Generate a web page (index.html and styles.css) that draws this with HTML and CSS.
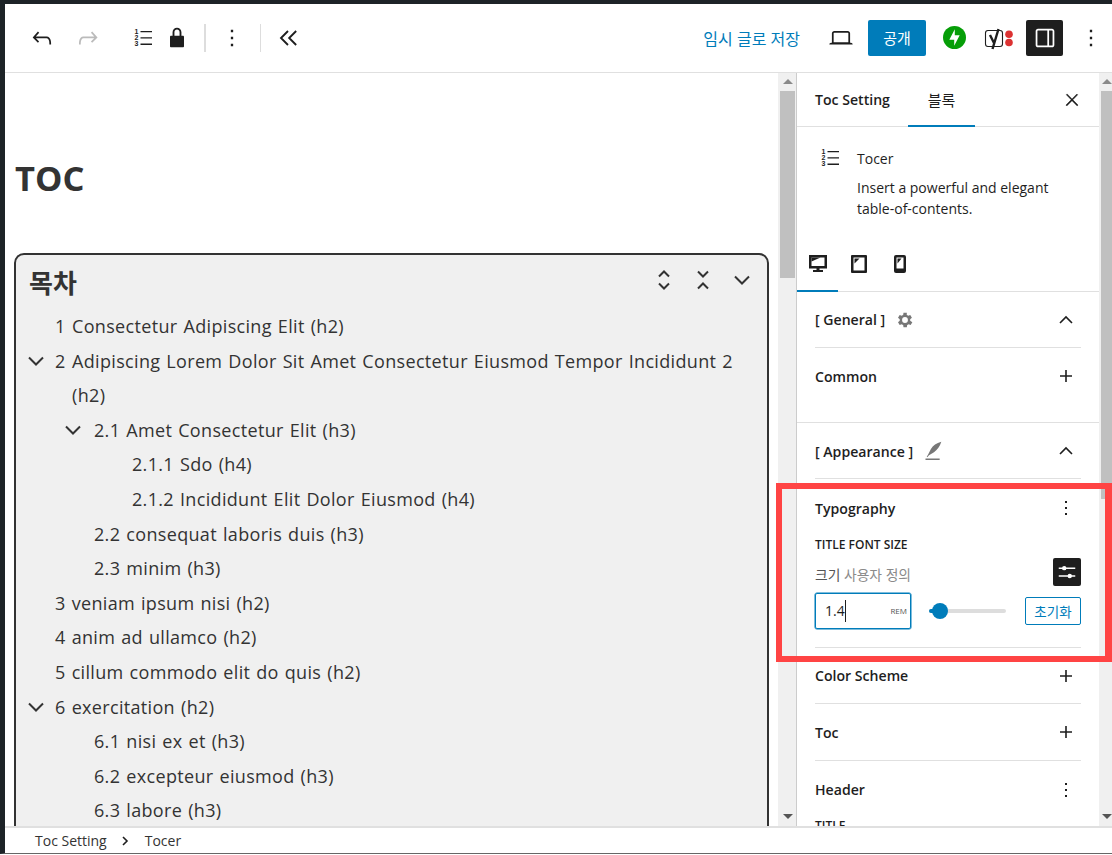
FILE: index.html
```html
<!DOCTYPE html>
<html lang="ko">
<head>
<meta charset="utf-8">
<title>Toc Setting</title>
<link rel="stylesheet" href="styles.css">
</head>
<body>
<div class="app">
  <header class="toolbar">
    <div class="tools-left">
      <svg class="ic big t-undo" viewBox="0 0 24 24"><path d="M18.3 11.7c-.6-.6-1.4-.9-2.3-.9H6.7l2.9-3.3-1.1-1-4.5 5L8.500 16l1-1-2.700-2.700H16c.5 0 .9.2 1.300.5 1 1 1 3.400 1 4.500v.3h1.500v-.2c0-1.500 0-4.300-1.500-5.700z"/></svg>
      <svg class="ic big t-redo dim" viewBox="0 0 24 24"><path d="M15.6 6.5l-1.100 1 2.900 3.300H8c-.9 0-1.700.3-2.300.9-1.400 1.500-1.400 4.200-1.400 5.700v.2h1.500v-.3c0-1.100 0-3.500 1-4.500.3-.3.7-.5 1.300-.5h9.200L14.500 15l1.100 1.100 4.600-4.600-4.600-5z"/></svg>
      <svg class="ic t-list" viewBox="0 0 24 24"><use href="#numlist"/></svg>
      <svg class="ic big t-lock" viewBox="0 0 24 24"><path d="M17 10h-1.200V7c0-2.100-1.700-3.800-3.800-3.800-2.100 0-3.800 1.700-3.800 3.800v3H7c-.6 0-1 .4-1 1v8c0 .6.4 1 1 1h10c.6 0 1-.4 1-1v-8c0-.6-.4-1-1-1zm-2.800 0H9.800V7c0-1.200 1-2.200 2.200-2.200s2.200 1 2.200 2.200v3z"/></svg>
      <span class="vsep sep-a"></span>
      <svg class="ic big t-more" viewBox="0 0 24 24"><path d="M13 19h-2v-2h2v2zm0-6h-2v-2h2v2zm0-6h-2V5h2v2z"/></svg>
      <span class="vsep sep-b"></span>
      <svg class="ic big t-collapse" viewBox="0 0 24 24"><path class="line" d="M12 6l-6 6 6 6M19 6l-6 6 6 6"/></svg>
    </div>
    <div class="tools-right">
      <span class="draft">임시 글로 저장</span>
      <svg class="ic big t-laptop" viewBox="0 0 24 24"><path d="M20.500 16h-.7V8c0-1.100-.9-2-2-2H6.200c-1.100 0-2 .9-2 2v8h-.7c-.8 0-1.500.7-1.500 1.500h20c0-.8-.7-1.500-1.500-1.500zM5.700 8c0-.3.2-.5.5-.5h11.600c.3 0 .5.2.5.5v7.600H5.700V8z"/></svg>
      <span class="publish">공개</span>
      <svg class="t-jetpack" viewBox="0 0 24 24"><circle cx="12" cy="12" r="12" fill="#069e08"/><path fill="#fff" d="M12.300 3.500v10.800H6.600zM11.700 20.500V9.700h5.700z"/></svg>
      <svg class="t-yoast" viewBox="0 0 30 24"><rect x="1.500" y="4.500" width="17" height="16" rx="2.500" fill="#fff" stroke="#1e1e1e" stroke-width="1.100"/><path fill="none" stroke="#1e1e1e" stroke-width="2.400" d="M6 9l4 8M14.500 3 8.500 23"/><circle cx="25" cy="8.200" r="3.800" fill="#dc3232"/><circle cx="25" cy="16.500" r="3.800" fill="#dc3232"/></svg>
      <span class="side-toggle"><svg class="ic big light" viewBox="0 0 24 24"><path d="M18 4H6c-1.100 0-2 .9-2 2v12c0 1.100.9 2 2 2h12c1.100 0 2-.9 2-2V6c0-1.100-.9-2-2-2zm-4 14.500H6c-.3 0-.5-.2-.5-.5V6c0-.3.2-.5.5-.5h8v13zm4.500-.5c0 .3-.2.5-.5.5h-2.500v-13H18c.3 0 .5.2.5.5v12z"/></svg></span>
      <svg class="ic big t-more2" viewBox="0 0 24 24"><path d="M13 19h-2v-2h2v2zm0-6h-2v-2h2v2zm0-6h-2V5h2v2z"/></svg>
    </div>
  </header>

  <div class="workspace">
    <main class="editor">
      <h1 class="post-title">TOC</h1>
      <section class="toc">
        <div class="toc-head">
          <h2 class="toc-title">목차</h2>
          <div class="toc-actions">
            <svg class="a-icon a-first" viewBox="0 0 12 20"><path class="line" d="M1 6.500l5-5 5 5M1 13.500l5 5 5-5"/></svg>
            <svg class="a-icon a-second" viewBox="0 0 12 20"><path class="line" d="M1 1.500l5 5 5-5M1 18.500l5-5 5 5"/></svg>
            <svg class="a-chev" viewBox="0 0 16 10"><path class="line" d="M1 1.500l7 7 7-7"/></svg>
          </div>
        </div>
        <ul class="toc-list">
          <li class="row l1"><span class="num">1</span><span>Consectetur Adipiscing Elit (h2)</span></li>
          <li class="row l1"><svg class="tog" viewBox="0 0 16 10"><path class="line" d="M1 1.500l7 7 7-7"/></svg><span class="num">2</span><span class="wrap">Adipiscing Lorem Dolor Sit Amet Consectetur Eiusmod Tempor Incididunt 2 (h2)</span></li>
          <li class="row l2"><svg class="tog" viewBox="0 0 16 10"><path class="line" d="M1 1.500l7 7 7-7"/></svg><span>2.1 Amet Consectetur Elit (h3)</span></li>
          <li class="row l3"><span>2.1.1 Sdo (h4)</span></li>
          <li class="row l3"><span>2.1.2 Incididunt Elit Dolor Eiusmod (h4)</span></li>
          <li class="row l2"><span>2.2 consequat laboris duis (h3)</span></li>
          <li class="row l2"><span>2.3 minim (h3)</span></li>
          <li class="row l1"><span>3 veniam ipsum nisi (h2)</span></li>
          <li class="row l1"><span>4 anim ad ullamco (h2)</span></li>
          <li class="row l1"><span>5 cillum commodo elit do quis (h2)</span></li>
          <li class="row l1"><svg class="tog" viewBox="0 0 16 10"><path class="line" d="M1 1.500l7 7 7-7"/></svg><span>6 exercitation (h2)</span></li>
          <li class="row l2"><span>6.1 nisi ex et (h3)</span></li>
          <li class="row l2"><span>6.2 excepteur eiusmod (h3)</span></li>
          <li class="row l2"><span>6.3 labore (h3)</span></li>
        </ul>
      </section>
    </main>
    <div class="scrollbar main-bar"><i class="up"></i><b class="thumb main-thumb"></b><span class="fill"></span><i class="down"></i></div>

    <aside class="sidebar">
      <div class="tabs">
        <span class="tab">Toc Setting</span>
        <span class="tab active">블록</span>
        <svg class="ic close" viewBox="0 0 24 24"><path d="M13 11.800l6.100-6.300-1-1-6.100 6.200-6.100-6.300-1 1 6.100 6.300-6.500 6.700 1 1 6.500-6.600 6.500 6.600 1-1z"/></svg>
      </div>
      <div class="card">
        <svg class="ic card-ic" viewBox="0 0 24 24"><use href="#numlist"/></svg>
        <div class="card-text">
          <div class="card-name">Tocer</div>
          <p class="card-desc">Insert a powerful and elegant table-of-contents.</p>
        </div>
      </div>
      <div class="devices">
        <span class="device active"><svg viewBox="0 0 20 20" class="dev"><path d="M1 1h18v13.500H11.500V16H15v2H5v-2h3.500v-1.500H1z"/><path fill="#fff" d="M3.500 3.500h13v8.500h-13z"/><path d="M3.500 3.500h9l-9 4z"/></svg></span>
        <span class="device"><svg viewBox="0 0 20 20" class="dev"><rect x="2" y="1" width="16" height="18" rx="1"/><path fill="#fff" d="M4.500 3.500h11v13h-11z"/><path d="M5.500 4.500h5l-5 5z"/></svg></span>
        <span class="device"><svg viewBox="0 0 20 20" class="dev"><rect x="4" y="1" width="12" height="18" rx="2"/><path fill="#fff" d="M6.500 3.500h7v11h-7z"/><path d="M7.500 4.500h4l-4 5z"/></svg></span>
      </div>
      <div class="group">
        <div class="sec-head h-general"><span class="sec-title">[ General ]<svg class="sec-ic" viewBox="0 0 24 24"><path d="M19.400 13a7.700 7.700 0 0 0 0-2l2.100-1.600-2-3.500-2.500 1a7.500 7.500 0 0 0-1.700-1L15.400 3.300h-4l-.4 2.600a7.500 7.500 0 0 0-1.700 1l-2.500-1-2 3.500L6.900 11a7.700 7.700 0 0 0 0 2l-2.100 1.600 2 3.500 2.500-1c.5.400 1.100.7 1.700 1l.4 2.600h4l.4-2.600c.6-.3 1.200-.6 1.700-1l2.500 1 2-3.500zM13.200 15.500a3.500 3.500 0 1 1 0-7 3.500 3.500 0 0 1 0 7z" transform="translate(-1.200 0)"/></svg></span><svg class="ic chev" viewBox="0 0 24 24"><path class="line" d="M6 15l6-6 6 6"/></svg></div>
        <div class="sec-row common"><span class="sec-title">Common</span><svg class="ic plus" viewBox="0 0 24 24"><path d="M18 11.200h-5.200V6h-1.600v5.200H6v1.600h5.200V18h1.600v-5.200H18z"/></svg></div>
      </div>
      <div class="group g-appear">
        <div class="sec-head h-appear"><span class="sec-title">[ Appearance ]<svg class="sec-ic pen" viewBox="0 0 24 24"><path d="M22 1c-6 1.500-10 4.500-12.500 8.500L6 16.500 4.500 19l.7.5 2-2.500 6-3.500C17 11 20 7 22 1zM3 21h17v1.800H3z"/></svg></span><svg class="ic chev" viewBox="0 0 24 24"><path class="line" d="M6 15l6-6 6 6"/></svg></div>
        <div class="typo">
          <div class="typo-head"><span class="sec-title">Typography</span><svg class="ic more-s" viewBox="0 0 24 24"><path d="M13 19h-2v-2h2v2zm0-6h-2v-2h2v2zm0-6h-2V5h2v2z"/></svg></div>
          <div class="cap">TITLE FONT SIZE</div>
          <div class="size-row"><span class="size-label">크기 <em>사용자 정의</em></span><span class="tune"><svg viewBox="0 0 24 24" class="tune-ic"><path fill="#fff" d="M3 7h18v1.600H3zM3 15.500h18v1.600H3z"/><circle cx="9" cy="7.800" r="2.400" fill="#fff"/><circle cx="15" cy="16.300" r="2.400" fill="#fff"/></svg></span></div>
          <div class="ctl-row">
            <div class="num-input"><span class="val">1.4</span><span class="unit">REM</span></div>
            <div class="slider"><span class="track-on"></span><span class="knob"></span></div>
            <span class="reset">초기화</span>
          </div>
        </div>
        <div class="sec-row cs"><span class="sec-title">Color Scheme</span><svg class="ic plus" viewBox="0 0 24 24"><path d="M18 11.200h-5.200V6h-1.600v5.200H6v1.600h5.200V18h1.600v-5.200H18z"/></svg></div>
        <div class="sec-row"><span class="sec-title">Toc</span><svg class="ic plus" viewBox="0 0 24 24"><path d="M18 11.200h-5.200V6h-1.600v5.200H6v1.600h5.200V18h1.600v-5.200H18z"/></svg></div>
        <div class="sec-row nob"><span class="sec-title">Header</span><svg class="ic more-s" viewBox="0 0 24 24"><path d="M13 19h-2v-2h2v2zm0-6h-2v-2h2v2zm0-6h-2V5h2v2z"/></svg></div>
        <div class="cap clipcap">TITLE</div>
      </div>
    </aside>
    <div class="scrollbar side-bar"><i class="up"></i><b class="thumb side-thumb"></b><span class="fill"></span><i class="down"></i></div>
  </div>

  <footer class="crumbs"><span>Toc Setting</span><svg class="crumb-sep" viewBox="0 0 8 10"><path class="line" d="M2 1l4 4-4 4"/></svg><span>Tocer</span></footer>
</div>
<div class="annotation"></div>
<svg class="defs" width="0" height="0"><defs><g id="numlist"><path d="M9.500 5h11.500v1.300H9.500zM9.500 11.300h11.500v1.300H9.500zM9.500 17.600h11.500v1.300H9.500z"/><text x="3.500" y="8" class="nl">1</text><text x="3.500" y="14" class="nl">2</text><text x="3.500" y="20" class="nl">3</text></g></defs></svg>
</body>
</html>
```
FILE: styles.css
```css
* { box-sizing: border-box; }
html, body { margin: 0; height: 855px; overflow: hidden; background: #fff; }
body { font-family: "Open Sans", "Noto Sans CJK KR", sans-serif; color: #1e1e1e; font-size: 14px; position: relative; }
.defs { position: absolute; }
.nl { font-size: 7px; font-weight: 700; font-family: "Liberation Sans", sans-serif; fill: currentColor; }
svg { display: block; flex: none; }
.ic { width: 24px; height: 24px; fill: #1e1e1e; color: #1e1e1e; }
.ic.big { width: 28px; height: 28px; }
.line { fill: none; stroke: #333; stroke-width: 2; }
.app { height: 854px; border-top: 4px solid #1d2327; border-left: 5px solid #1d2327; border-bottom: 1px solid #666; display: flex; flex-direction: column; }

.toolbar { height: 69px; flex: none; border-bottom: 1px solid #e0e0e0; display: flex; justify-content: space-between; align-items: center; padding-bottom: 1px; }
.tools-left { display: flex; align-items: center; padding-left: 23px; }
.t-redo { margin-left: 18px; }
.ic.dim { fill: #bbb; }
.t-list { margin-left: 29px; }
.t-lock { margin-left: 8px; }
.t-more { margin-left: 12px; }
.t-collapse { margin-left: 13px; }
.t-collapse .line { stroke: #1e1e1e; stroke-width: 1.600; }
.vsep { width: 1px; height: 28px; background: #ddd; }
.sep-a { margin-left: 13px; width: 2px; }
.sep-b { margin-left: 14px; }
.tools-right { display: flex; align-items: center; padding-right: 7px; }
.draft { color: #007cba; font-size: 16px; margin-right: 27px; white-space: nowrap; }
.publish { width: 58px; height: 36px; background: #007cba; color: #fff; border-radius: 2px; display: flex; align-items: center; justify-content: center; margin-left: 13px; font-size: 15px; }
.t-jetpack { width: 23px; height: 23px; margin-left: 17px; }
.t-yoast { width: 30px; height: 24px; margin-left: 18px; }
.side-toggle { width: 37px; height: 36px; background: #1e1e1e; border-radius: 2px; display: flex; align-items: center; justify-content: center; margin-left: 12px; }
.ic.light { fill: #fff; }
.t-more2 { margin-left: 14px; }

.workspace { flex: 1; min-height: 0; display: flex; overflow: hidden; }
.editor { width: 773px; flex: none; overflow: hidden; padding: 0 9px 0 9px; }
.post-title { margin: 0; padding-top: 80px; height: 180px; font-size: 34.500px; line-height: 49px; font-weight: 700; color: #333; padding-left: 1px; }
.toc { border: 2px solid #333; border-radius: 10px; background: #f0f0f0; padding: 0 13px; height: 700px; color: #333; font-family: "Open Sans", "Noto Sans CJK KR", sans-serif; font-size: 18px; letter-spacing: .33px; word-spacing: 1px; }
.toc-head { display: flex; justify-content: space-between; align-items: flex-start; height: 54px; }
.toc-title { margin: 0; font-size: 26px; font-weight: 700; line-height: 56px; letter-spacing: 0; }
.toc-actions { display: flex; align-items: center; height: 50px; }
.a-icon { width: 12px; height: 20px; }
.a-first { margin-right: 27px; }
.a-second { margin-right: 25px; }
.a-chev { width: 16px; height: 10px; margin-right: 4px; }
.toc-list { list-style: none; margin: 0; padding: 0; }
.row { display: flex; position: relative; line-height: 34.600px; white-space: nowrap; }
.l1 { padding-left: 26px; }
.l2 { padding-left: 65px; }
.l3 { padding-left: 103px; }
.num { width: 17px; flex: none; }
.wrap { white-space: normal; width: 672px; }
.tog { position: absolute; width: 16px; height: 10px; top: 12px; }
.l1 .tog { left: -1px; }
.l2 .tog { left: 36px; }

.scrollbar { background: #f0f0f0; flex: none; position: relative; display: flex; flex-direction: column; height: 100%; }
.main-bar { width: 18px; padding-left: 2px; padding-right: 1px; }
.side-bar { width: 13px; padding-left: 2px; }
.thumb { display: block; background: #c0c0c0; flex: none; margin-top: 18px; }
.main-thumb { height: 187px; }
.side-thumb { height: 408px; }
.up, .down { position: absolute; left: 50%; margin-left: -4px; width: 0; height: 0; border-left: 5px solid transparent; border-right: 5px solid transparent; }
.up { top: 6px; border-bottom: 5px solid #8a8a8a; }
.down { bottom: 7px; border-top: 5px solid #555; }
.fill { flex: 1; }

.sidebar { width: 303px; flex: none; border-left: 1px solid #ccc; overflow: hidden; }
.tabs { height: 54px; border-bottom: 1px solid #e0e0e0; display: flex; align-items: center; position: relative; padding-left: 18px; }
.tab { font-weight: 600; font-size: 14.100px; }
.tab.active { font-weight: 400; font-size: 15px; position: absolute; left: 111px; width: 67px; height: 54px; line-height: 54px; text-align: center; border-bottom: 2px solid #007cba; top: 0; }
.close { position: absolute; right: 15px; top: 15px; transform: scale(.8); stroke: #1e1e1e; stroke-width: .6; }
.card { display: flex; padding: 19px 18px 0 21px; height: 111px; }
.card-ic { margin-right: 15px; }
.card-text { padding-top: 1px; }
.card-name { line-height: 24px; color: #1e1e1e; }
.card-desc { margin: 6px 0 0; line-height: 21px; width: 205px; }
.devices { display: flex; height: 54px; border-bottom: 1px solid #e0e0e0; }
.device { width: 41px; height: 54px; display: flex; align-items: flex-start; justify-content: center; padding-top: 16px; }
.device.active { border-bottom: 2px solid #007cba; }
.dev { width: 20px; height: 20px; fill: #1e1e1e; }
.group { padding: 0 18px; }
.g-appear { border-top: 1px solid #e0e0e0; }
.sec-head, .sec-row, .typo-head { display: flex; justify-content: space-between; align-items: center; }
.sec-title { font-weight: 600; font-size: 14.100px; display: flex; align-items: center; }
.sec-head { height: 56px; border-bottom: 1px solid #e0e0e0; }
.h-appear .sec-title { padding-top: 1px; }
.sec-row { height: 57px; border-bottom: 1px solid #e0e0e0; }
.sec-row.cs { height: 56px; }
.sec-row.common { height: 74px; border-bottom: 0; padding-bottom: 18px; }
.nob { border-bottom: 0; }
.chev, .plus { margin-right: 3px; }
.chev .line { stroke: #1e1e1e; stroke-width: 1.600; }
.sec-ic { width: 20px; height: 20px; fill: #777; margin-left: 10px; }
.more-s { margin-right: 3px; }
.typo { height: 169px; border-bottom: 1px solid #e0e0e0; padding-top: 17px; }
.typo-head { height: 24px; }
.cap { font-size: 12px; font-weight: 600; text-transform: uppercase; margin-top: 17px; line-height: 16px; }
.clipcap { margin-top: 0; }
.size-row { display: flex; justify-content: space-between; align-items: center; margin-top: 5px; height: 28px; }
.size-label { font-size: 13.800px; color: #555; padding-top: 3px; }
.size-label em { font-style: normal; color: #8a8a8a; }
.tune { width: 28px; height: 28px; background: #1e1e1e; border-radius: 2px; display: flex; align-items: center; justify-content: center; }
.tune-ic { width: 22px; height: 22px; }
.ctl-row { display: flex; align-items: center; margin-top: 7px; }
.num-input { width: 96px; height: 36px; border: 1px solid #007cba; box-shadow: 0 0 0 .5px #007cba; border-radius: 2px; display: flex; justify-content: space-between; align-items: center; padding: 0 3px 0 9px; }
.val { border-right: 1px solid #1e1e1e; line-height: 22px; font-size: 14px; }
.unit { font-size: 8px; color: #555; margin-bottom: 2px; }
.slider { width: 77px; height: 4px; background: #ddd; border-radius: 2px; margin-left: 18px; position: relative; }
.track-on { position: absolute; left: 0; top: 0; height: 4px; width: 10px; background: #007cba; border-radius: 2px; }
.knob { position: absolute; left: 3px; top: -6px; width: 16px; height: 16px; border-radius: 50%; background: #007cba; }
.reset { width: 56px; height: 28px; margin-left: 19px; border: 1px solid #007cba; border-radius: 2px; color: #007cba; font-size: 13.500px; display: flex; align-items: center; justify-content: center; }

.crumbs { height: 27px; flex: none; border-top: 2px solid #e0e0e0; padding-left: 30px; display: flex; align-items: center; font-size: 14px; color: #333; }
.crumb-sep { width: 8px; height: 10px; margin: 0 16px 0 14px; }
.crumb-sep .line { stroke: #1e1e1e; stroke-width: 1.600; }

.annotation { position: absolute; left: 776px; top: 483px; width: 336px; height: 179px; border: 6.500px solid #ff4444; border-right-width: 7px; pointer-events: none; }
```
